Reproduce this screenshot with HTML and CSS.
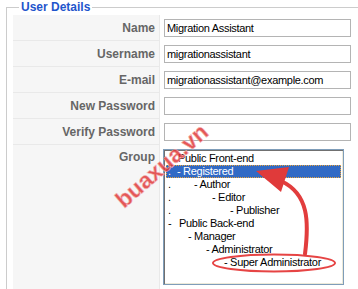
FILE: index.html
```html
<!DOCTYPE html>
<html lang="en">
<head>
    <meta charset="UTF-8">
    <title>User Details</title>
    <link rel="stylesheet" href="styles.css">
</head>
<body>
<fieldset class="adminform">
    <legend>User Details</legend>
    <div class="admintable">
        <div class="key">Name</div>
        <div class="field"><input type="text" class="inputbox" value="Migration Assistant"></div>

        <div class="key">Username</div>
        <div class="field"><input type="text" class="inputbox" value="migrationassistant"></div>

        <div class="key">E-mail</div>
        <div class="field"><input type="text" class="inputbox" value="migrationassistant@example.com"></div>

        <div class="key">New Password</div>
        <div class="field"><input type="password" class="inputbox"></div>

        <div class="key">Verify Password</div>
        <div class="field"><input type="password" class="inputbox"></div>

        <div class="key key-top">Group</div>
        <div class="field field-top">
            <div class="grouplist">
                <div class="opt"><span class="lvl" style="width: 10px"></span>Public Front-end</div>
                <div class="opt selected"><span class="lvl" style="width: 9px">.</span>- Registered</div>
                <div class="opt"><span class="lvl" style="width: 26px">.</span>- Author</div>
                <div class="opt"><span class="lvl" style="width: 44px">.</span>- Editor</div>
                <div class="opt"><span class="lvl" style="width: 62px">.</span>- Publisher</div>
                <div class="opt"><span class="lvl" style="width: 11px">-</span>Public Back-end</div>
                <div class="opt"><span class="lvl" style="width: 20px"></span>- Manager</div>
                <div class="opt"><span class="lvl" style="width: 38px"></span>- Administrator</div>
                <div class="opt"><span class="lvl" style="width: 56px"></span>- Super Administrator</div>
            </div>
        </div>
    </div>
</fieldset>

<!-- annotation drawn on top of the screenshot -->
<svg class="overlay" width="358" height="289" viewBox="0 0 358 289">
    <text class="watermark" x="0" y="0" transform="translate(124 209) rotate(-41)">buaxua.vn</text>
    <ellipse cx="274" cy="263" rx="61" ry="8.5" fill="none" stroke="#e64444" stroke-width="2"/>
    <path d="M305 254 C309 222, 309 194, 281 181" fill="none" stroke="#e23d3d" stroke-width="4" stroke-linecap="round"/>
    <polygon points="256,171 289,167 281,192" fill="#e03a3a"/>
</svg>
</body>
</html>
```

FILE: styles.css
```css
body {
    margin: 0;
    padding: 0;
    width: 358px;
    height: 289px;
    overflow: hidden;
    position: relative;
    background-color: #fff;
    font-family: 'Liberation Sans', Arial, sans-serif;
}

.adminform {
    box-sizing: border-box;
    margin: 0 0 0 6px;
    padding: 1px 6px 0 6px;
    width: 352px;
    border: 1px solid #cccccc;
    border-right: none;
}

.adminform legend {
    margin-left: 6px;
    padding: 0 2px;
    color: #1f55cc;
    font-size: 12px;
    font-weight: bold;
    line-height: 14px;
}

.admintable {
    display: grid;
    grid-template-columns: 147px 187px;
    grid-auto-rows: 26px;
    column-gap: 4px;
}

.key {
    background-color: #f6f6f6;
    border-bottom: 1px solid #e9e9e9;
    border-right: 1px solid #e9e9e9;
    color: #666;
    font-size: 12px;
    font-weight: bold;
    padding-right: 4px;
    display: flex;
    align-items: center;
    justify-content: flex-end;
}

.key-top {
    grid-row: span 6;
    align-items: flex-start;
    padding-top: 5px;
}

.field {
    display: flex;
    align-items: center;
}

.field-top {
    grid-row: span 6;
    align-items: flex-start;
    padding-top: 4px;
    margin-left: -1px;
}

.inputbox {
    box-sizing: border-box;
    width: 187px;
    height: 18px;
    margin: 0;
    padding: 0 2px;
    border: 1px solid #b4b4b4;
    font-family: 'Liberation Sans', Arial, sans-serif;
    font-size: 11px;
    letter-spacing: -0.3px;
    color: #000;
    outline: none;
}

.grouplist {
    box-sizing: border-box;
    width: 181px;
    height: 136px;
    border: 1px solid #7f9db9;
    box-shadow: inset 1px 1px 0 #707070, inset -1px -1px 0 #ece9d8;
    padding: 2px 2px 0 2px;
    font-size: 11px;
    letter-spacing: -0.3px;
    color: #000;
}

.opt {
    display: flex;
    height: 13px;
    line-height: 13px;
    white-space: nowrap;
    box-sizing: border-box;
    padding-left: 2px;
}

.opt .lvl {
    display: inline-block;
    flex: none;
}

.opt.selected {
    background-color: #316ac5;
    color: #fff;
    outline: 1px dotted #e8a33c;
    outline-offset: -1px;
}

.overlay {
    position: absolute;
    left: 0;
    top: 0;
    pointer-events: none;
}

.watermark {
    font-family: 'Liberation Sans', Arial, sans-serif;
    font-weight: bold;
    font-size: 23px;
    fill: #e03a3a;
    fill-opacity: 0.85;
    stroke: #f3b0b0;
    stroke-width: 0.6;
}
```
